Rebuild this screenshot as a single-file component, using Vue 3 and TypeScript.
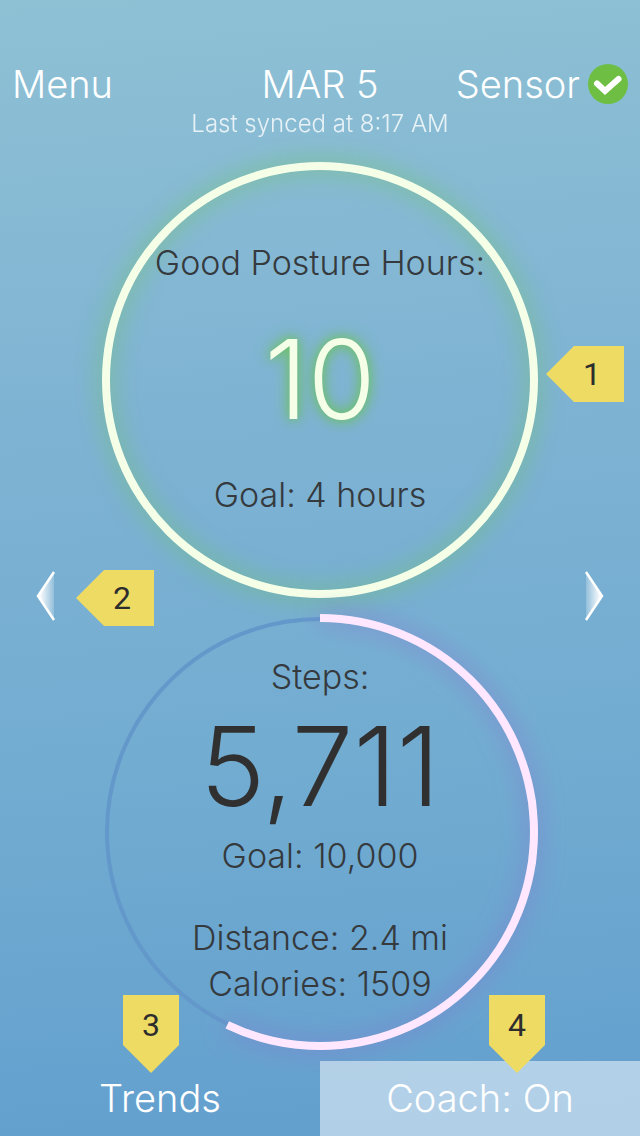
<script setup lang="ts">
import { computed, ref } from 'vue'

const steps = ref(5711)
const stepGoal = ref(10000)
const coachOn = ref(true)

const format = (n: number): string => n.toLocaleString('en-US')

const RADIUS = 214
const circumference = 2 * Math.PI * RADIUS
const stepDash = computed(() => {
  const share = Math.min(steps.value / stepGoal.value, 1)
  return `${circumference * share} ${circumference}`
})
</script>

<template>
  <div class="screen">
    <header class="top">
      <button type="button" class="nav">Menu</button>
      <h1 class="date">MAR 5</h1>
      <button type="button" class="nav sensor">
        Sensor
        <svg class="tick" viewBox="0 0 40 40" aria-hidden="true">
          <circle cx="20" cy="20" r="20" fill="#6ebe44" />
          <path d="M9 19.5 L17 27 L30.5 15" fill="none" stroke="#fff" stroke-width="6" stroke-linecap="round" />
        </svg>
      </button>
      <p class="synced">Last synced at 8:17 AM</p>
    </header>

    <main class="day">
      <div class="side left">
        <button type="button" class="arrow" aria-label="Previous day">
          <svg viewBox="0 0 20 50" aria-hidden="true">
            <defs>
              <linearGradient id="fadeLeft" x1="0" x2="1" y1="0" y2="0">
                <stop offset="0.2" stop-color="#fff" stop-opacity="0.9" />
                <stop offset="1" stop-color="#fff" stop-opacity="0.2" />
              </linearGradient>
            </defs>
            <path d="M18 1 L2 25 L18 49 Z" fill="url(#fadeLeft)" />
            <path d="M18 1 L2 25 L18 49" fill="none" stroke="#fff" stroke-width="2.5" />
          </svg>
        </button>
      </div>

      <div class="rings">
        <section class="ring">
          <svg class="dial" viewBox="0 0 436 436" aria-hidden="true">
            <circle class="good" cx="218" cy="218" r="214" />
          </svg>
          <div class="facts posture">
            <h2 class="label">Good Posture Hours:</h2>
            <p class="figure glow">10</p>
            <p class="label">Goal: 4 hours</p>
          </div>
        </section>

        <section class="ring">
          <svg class="dial" viewBox="0 0 436 436" aria-hidden="true">
            <circle class="track" cx="218" cy="218" r="213" />
            <circle
              class="progress"
              cx="218"
              cy="218"
              r="214"
              transform="rotate(-90 218 218)"
              :stroke-dasharray="stepDash"
            />
          </svg>
          <div class="facts steps">
            <h2 class="label">Steps:</h2>
            <p class="figure">{{ format(steps) }}</p>
            <p class="label">Goal: {{ format(stepGoal) }}</p>
            <p class="label extra">Distance: 2.4 mi</p>
            <p class="label">Calories: 1509</p>
          </div>
        </section>
      </div>

      <div class="side right">
        <button type="button" class="arrow" aria-label="Next day">
          <svg viewBox="0 0 20 50" aria-hidden="true">
            <defs>
              <linearGradient id="fadeRight" x1="1" x2="0" y1="0" y2="0">
                <stop offset="0.2" stop-color="#fff" stop-opacity="0.9" />
                <stop offset="1" stop-color="#fff" stop-opacity="0.2" />
              </linearGradient>
            </defs>
            <path d="M2 1 L18 25 L2 49 Z" fill="url(#fadeRight)" />
            <path d="M2 1 L18 25 L2 49" fill="none" stroke="#fff" stroke-width="2.5" />
          </svg>
        </button>
      </div>
    </main>

    <nav class="tabs">
      <button type="button" class="tab">Trends</button>
      <button type="button" class="tab active" :aria-pressed="coachOn" @click="coachOn = !coachOn">
        Coach: {{ coachOn ? 'On' : 'Off' }}
      </button>
    </nav>

    <span class="pin point-left pin-one">1</span>
    <span class="pin point-left pin-two">2</span>
    <span class="pin point-down pin-three">3</span>
    <span class="pin point-down pin-four">4</span>
  </div>
</template>

<style>
body {
  margin: 0;
}
</style>

<style scoped>
.screen {
  position: relative;
  display: flex;
  flex-direction: column;
  min-height: 100vh;
  background: linear-gradient(176deg, #8ec1d4 0%, #7fb3d3 36%, #72acd1 66%, #629fce 100%);
  color: #353a3e;
  font-family: Inter, "Liberation Sans", sans-serif;
  font-weight: 300;
}

button {
  padding: 0;
  border: 0;
  background: none;
  color: inherit;
  font: inherit;
  cursor: pointer;
}

h1,
h2,
p {
  margin: 0;
  font-weight: 300;
}

.top {
  display: grid;
  grid-template-columns: 1fr auto 1fr;
  align-items: center;
  padding: 60px 12px 0;
  color: #fff;
}

.nav,
.date {
  font-size: 38px;
  line-height: 48px;
}

.nav {
  justify-self: start;
}

.sensor {
  display: flex;
  align-items: center;
  justify-self: end;
  gap: 8px;
}

.tick {
  width: 40px;
  height: 40px;
}

.synced {
  grid-column: 1 / -1;
  font-size: 24px;
  line-height: 32px;
  text-align: center;
  opacity: 0.8;
}

.day {
  display: grid;
  flex: 1;
  grid-template-columns: 1fr 436px 1fr;
  align-items: start;
  padding-top: 22px;
}

.side {
  display: flex;
  align-items: center;
  height: 868px;
}

.left {
  padding-left: 36px;
}

.right {
  justify-content: flex-end;
  padding-right: 36px;
}

.arrow,
.arrow svg {
  display: block;
  width: 20px;
  height: 50px;
}

.rings {
  display: grid;
  gap: 16px;
}

.ring {
  display: grid;
}

.dial,
.facts {
  grid-area: 1 / 1;
}

.dial {
  width: 436px;
  height: 436px;
  overflow: visible;
}

.dial circle {
  fill: none;
}

.good {
  stroke: #f5ffe8;
  stroke-width: 8;
  filter: drop-shadow(0 0 12px rgba(112, 196, 96, 0.9));
}

.track {
  stroke: #6398cb;
  stroke-width: 4;
}

.progress {
  stroke: #ffe8ff;
  stroke-width: 8;
  filter: drop-shadow(0 0 12px rgba(136, 112, 208, 0.8));
}

.facts {
  text-align: center;
  white-space: nowrap;
}

.label {
  font-size: 34px;
  line-height: 46px;
}

.figure {
  color: #303030;
  font-size: 110px;
  line-height: 132px;
}

.posture {
  padding-top: 78px;
}

.posture .figure {
  margin: 27px 0;
}

.figure.glow {
  color: #f5ffe8;
  text-shadow: 0 0 16px #6cc25c, 0 0 10px rgba(108, 194, 92, 0.8);
}

.steps {
  padding-top: 40px;
}

.steps .figure {
  padding-bottom: 1px;
}

.extra {
  margin-top: 36px;
}

.tabs {
  display: grid;
  grid-template-columns: 1fr 1fr;
  color: #fff;
}

.tab {
  height: 75px;
  padding-bottom: 2px;
  font-size: 38px;
  line-height: 48px;
}

.active {
  background: rgba(255, 255, 255, 0.5);
}

.pin {
  position: absolute;
  box-sizing: border-box;
  background: #eedb63;
  color: #2d2d2d;
  font: 400 32px/56px Roboto, sans-serif;
  text-align: center;
}

.point-left {
  width: 78px;
  height: 56px;
  padding-left: 14px;
  clip-path: polygon(0 50%, 28px 0, 100% 0, 100% 100%, 28px 100%);
}

.point-down {
  width: 56px;
  height: 78px;
  padding-top: 2px;
  clip-path: polygon(0 0, 100% 0, 100% 50px, 50% 100%, 0 50px);
}

.pin-one {
  top: 346px;
  right: 16px;
}

.pin-two {
  top: 570px;
  left: 76px;
}

.pin-three {
  top: 995px;
  left: 123px;
}

.pin-four {
  top: 995px;
  right: 95px;
}
</style>
